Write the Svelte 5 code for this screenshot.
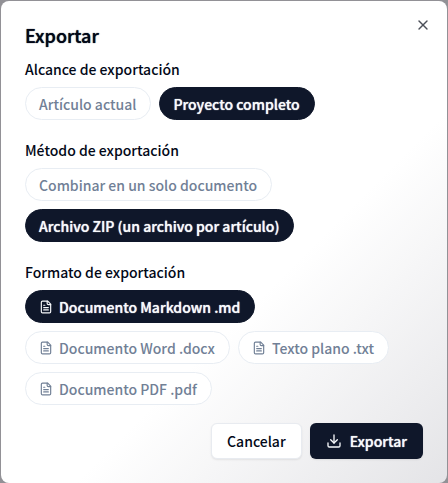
<script lang="ts">
  type Option = { value: string; label: string };

  const scopes: Option[] = [
    { value: 'current', label: 'Artículo actual' },
    { value: 'project', label: 'Proyecto completo' },
  ];

  const methods: Option[] = [
    { value: 'single', label: 'Combinar en un solo documento' },
    { value: 'zip', label: 'Archivo ZIP (un archivo por artículo)' },
  ];

  const formats: Option[] = [
    { value: 'md', label: 'Documento Markdown .md' },
    { value: 'docx', label: 'Documento Word .docx' },
    { value: 'txt', label: 'Texto plano .txt' },
    { value: 'pdf', label: 'Documento PDF .pdf' },
  ];

  let scope = $state('project');
  let method = $state('zip');
  let format = $state('md');
</script>

{#snippet fileIcon()}
  <svg class="file-icon" viewBox="0 0 24 24" aria-hidden="true">
    <path d="M15 2H6a2 2 0 0 0-2 2v16a2 2 0 0 0 2 2h12a2 2 0 0 0 2-2V7Z" />
    <path d="M14 2v4a2 2 0 0 0 2 2h4" />
    <path d="M10 9H8" />
    <path d="M16 13H8" />
    <path d="M16 17H8" />
  </svg>
{/snippet}

{#snippet group(id: string, title: string, options: Option[], selected: string, select: (value: string) => void, withIcon: boolean)}
  <section class="group" role="group" aria-labelledby={id}>
    <h3 {id}>{title}</h3>
    <div class="pills">
      {#each options as option (option.value)}
        <button
          type="button"
          class="pill"
          class:active={option.value === selected}
          aria-pressed={option.value === selected}
          onclick={() => select(option.value)}
        >
          {#if withIcon}
            {@render fileIcon()}
          {/if}
          {option.label}
        </button>
      {/each}
    </div>
  </section>
{/snippet}

<div class="overlay">
  <div class="dialog" role="dialog" aria-modal="true" aria-labelledby="dialog-title">
    <h2 id="dialog-title">Exportar</h2>

    <div class="groups">
      {@render group('scope', 'Alcance de exportación', scopes, scope, (v) => (scope = v), false)}
      {@render group('method', 'Método de exportación', methods, method, (v) => (method = v), false)}
      {@render group('format', 'Formato de exportación', formats, format, (v) => (format = v), true)}
    </div>

    <div class="footer">
      <button type="button" class="btn btn-outline">Cancelar</button>
      <button type="button" class="btn btn-primary">
        <svg viewBox="0 0 24 24" aria-hidden="true">
          <path d="M21 15v4a2 2 0 0 1-2 2H5a2 2 0 0 1-2-2v-4" />
          <path d="m7 10 5 5 5-5" />
          <path d="M12 15V3" />
        </svg>
        Exportar
      </button>
    </div>

    <button type="button" class="close" aria-label="Cerrar">
      <svg viewBox="0 0 24 24" aria-hidden="true">
        <path d="M18 6 6 18" />
        <path d="m6 6 12 12" />
      </svg>
    </button>
  </div>
</div>

<style>
  :global(body) {
    background: #929196;
  }

  .overlay {
    box-sizing: border-box;
    padding: 1px 1px 0;
    font-family: 'Noto Sans CJK SC', 'Noto Sans', sans-serif;
    font-size: 14px;
    line-height: 20px;
    color: #020817;
  }

  .dialog {
    position: relative;
    padding: 24px;
    border-radius: 8px;
    background: linear-gradient(135deg, #ffffff 0%, #ffffff 60%, #e4e4e7 100%);
  }

  h2,
  h3 {
    margin: 0;
    font-weight: 500;
  }

  h2,
  .pill.active,
  .btn-primary {
    text-shadow: 0 0 1px currentColor;
  }

  h2 {
    margin-bottom: 14px;
    font-size: 18px;
    line-height: 20px;
  }

  h3 {
    font-size: 14px;
    line-height: 20px;
  }

  .groups {
    display: flex;
    flex-direction: column;
    gap: 20px;
  }

  .group {
    display: flex;
    flex-direction: column;
    gap: 8px;
  }

  .pills {
    display: flex;
    flex-wrap: wrap;
    gap: 8px;
  }

  button {
    display: inline-flex;
    align-items: center;
    justify-content: center;
    font: inherit;
    font-weight: 500;
    cursor: pointer;
  }

  svg {
    flex: none;
    width: 16px;
    height: 16px;
    fill: none;
    stroke: currentColor;
    stroke-width: 2;
    stroke-linecap: round;
    stroke-linejoin: round;
  }

  .pill {
    gap: 6px;
    height: 33px;
    padding: 0 14px 0 13px;
    border: 1px solid #e8edf3;
    border-radius: 999px;
    background: #ffffff;
    color: #718096;
    white-space: nowrap;
  }

  .pill.active {
    border-color: #0f172a;
    background: #0f172a;
    color: #f8fafc;
  }

  .file-icon {
    width: 14px;
    height: 14px;
  }

  .footer {
    display: flex;
    justify-content: flex-end;
    gap: 8px;
    margin-top: 18px;
  }

  .btn {
    gap: 8px;
    height: 36px;
    padding: 0 15px;
    border: 1px solid transparent;
    border-radius: 6px;
    box-shadow: 0 1px 2px rgba(0, 0, 0, 0.08);
  }

  .btn-outline {
    border-color: #e8ebf0;
    background: #ffffff;
    color: #020817;
  }

  .btn-primary {
    background: #0f172a;
    color: #f8fafc;
  }

  .close {
    position: absolute;
    top: 16px;
    right: 16px;
    padding: 0;
    border: 0;
    background: none;
    color: #4b4f58;
  }
</style>
